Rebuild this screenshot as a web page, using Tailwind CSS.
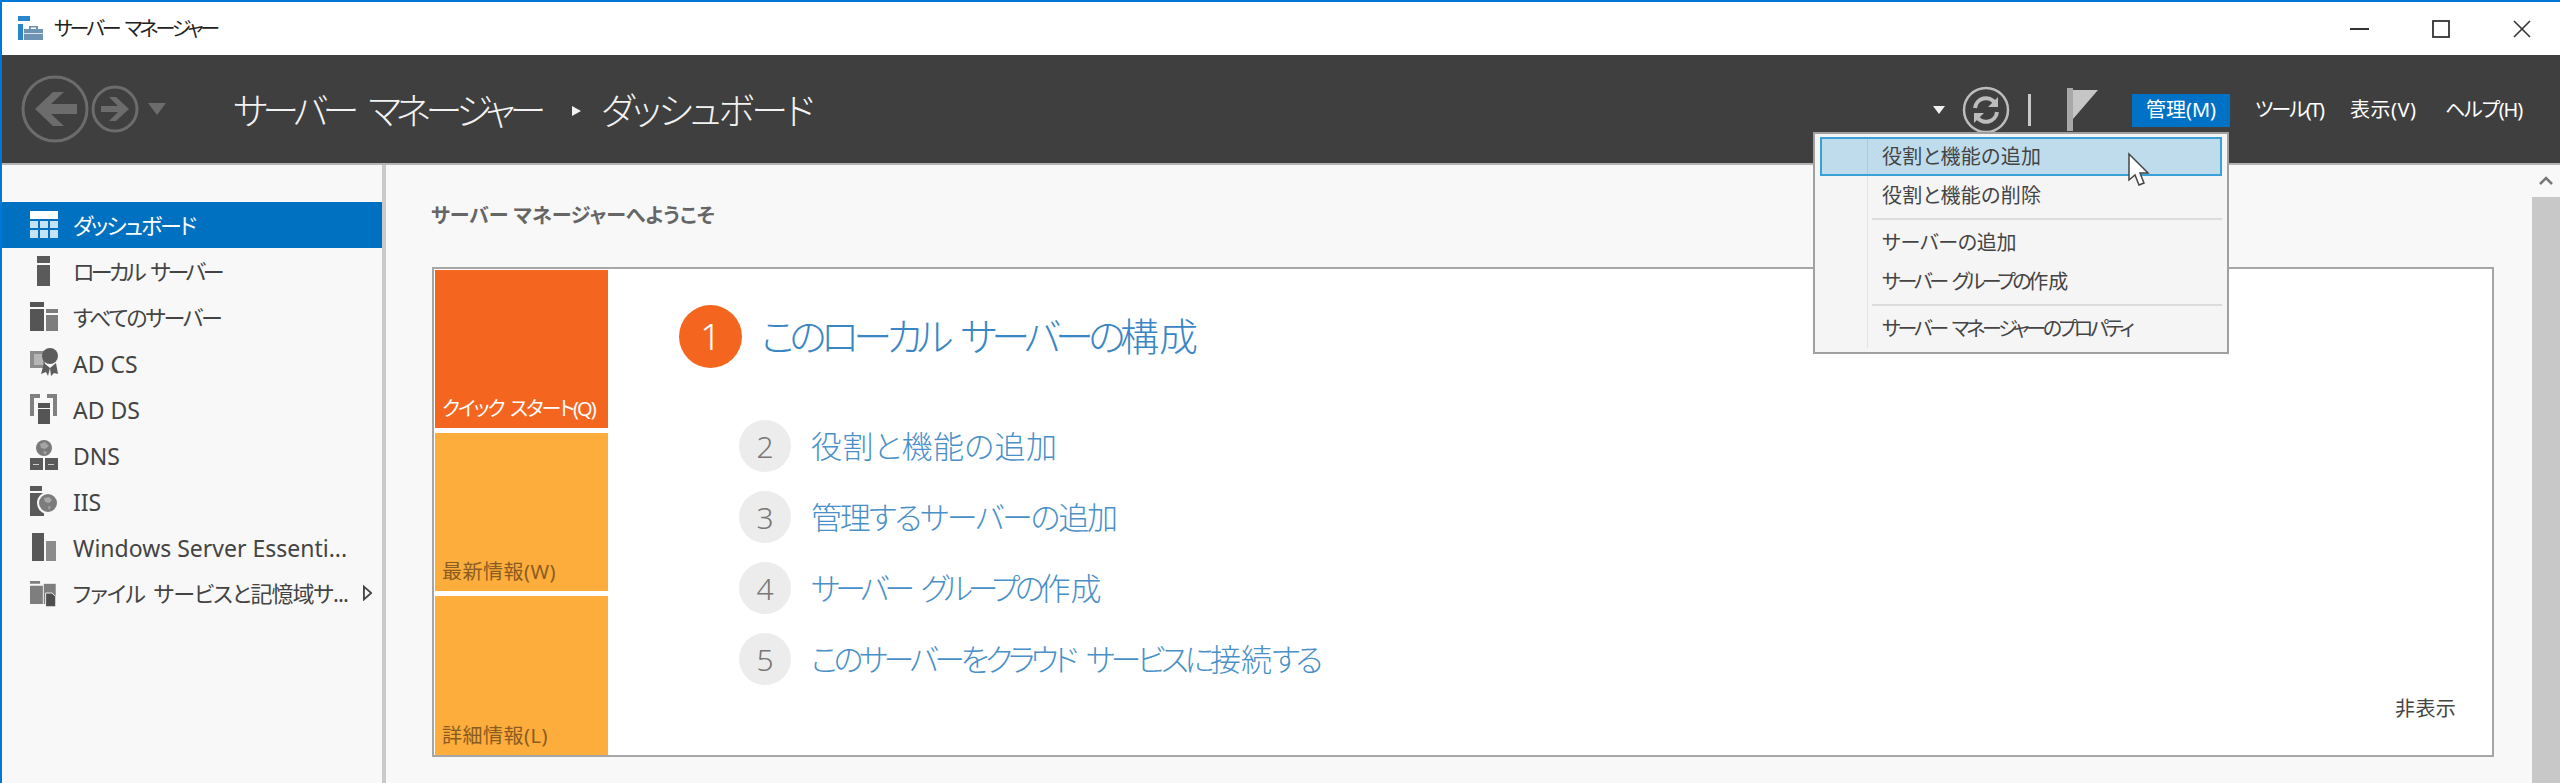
<!DOCTYPE html>
<html lang="ja">
<head>
    <meta charset="UTF-8">
    <title>サーバー マネージャー</title>
    <script src="https://cdn.jsdelivr.net/npm/@tailwindcss/browser@4"></script>
</head>
<body class="bg-[#f8f8f8] overflow-hidden font-['Noto_Sans','Noto_Sans_CJK_JP',sans-serif] [font-feature-settings:'palt']">
<div class="relative w-[2560px] h-[783px] flex flex-col border-l-2 border-t-2 border-[#0078d7]">

    <!-- title bar -->
    <div class="h-[53px] shrink-0 bg-white flex items-center pl-[16px]">
        <svg class="w-[26px] h-[26px]" viewBox="0 0 26 26">
            <rect x="0" y="0" width="12" height="5" fill="#2a86cc"/>
            <rect x="0" y="8" width="5" height="16" fill="#2a86cc"/>
            <path d="M6 13h19v11H6z" fill="#6f93b3"/>
            <path d="M11 13v-3h9v3h-2v-1.500h-5V13z" fill="#6f93b3"/>
            <rect x="6" y="17" width="19" height="1" fill="#dce6ef"/>
        </svg>
        <span class="ml-[10px] text-[20px] text-[#222] tracking-[-3.100px] [word-spacing:4px]">サーバー マネージャー</span>
        <div class="ml-auto flex items-center">
            <svg class="w-[20px] h-[20px] mr-[62px]" viewBox="0 0 20 20"><path d="M0 10h19" stroke="#333" stroke-width="2"/></svg>
            <svg class="w-[18px] h-[18px] mr-[63px]" viewBox="0 0 18 18"><rect x="1" y="1" width="16" height="16" fill="none" stroke="#333" stroke-width="1.800"/></svg>
            <svg class="w-[18px] h-[18px] mr-[29px]" viewBox="0 0 18 18"><path d="M1 1l16 16M17 1L1 17" stroke="#333" stroke-width="1.600"/></svg>
        </div>
    </div>

    <!-- dark header -->
    <div class="h-[110px] shrink-0 bg-[#3f3f3f] border-b-2 border-[#b4b4b4] flex items-center">
        <svg class="ml-[18px] w-[150px] h-[70px]" viewBox="0 0 150 70">
            <circle cx="35" cy="35" r="32" fill="none" stroke="#6c6c6c" stroke-width="3"/>
            <path d="M15 35L33 18h11L31 30h26v10H31l13 12H33z" fill="#6c6c6c"/>
            <circle cx="95" cy="35" r="22" fill="none" stroke="#6c6c6c" stroke-width="3"/>
            <path d="M109 35L96 23h-7l9 9H81v6h17l-9 9h7z" fill="#6c6c6c"/>
            <path d="M128 29h18l-9 12z" fill="#6c6c6c"/>
        </svg>
        <span class="ml-[63px] pt-[3px] text-[37px] text-[#f2f2f2] font-light tracking-[-5.400px] [word-spacing:10px] leading-none whitespace-nowrap">サーバー マネージャー</span>
        <svg class="ml-[28px] mr-[18px] mt-[3px] w-[14px] h-[14px]" viewBox="0 0 14 14"><path d="M3 2l9 5-9 5z" fill="#f2f2f2"/></svg>
        <span class="pt-[3px] text-[37px] text-[#f2f2f2] font-light tracking-[-2.700px] leading-none whitespace-nowrap">ダッシュボード</span>

        <div class="ml-auto flex items-center pr-[37px] pt-[2px]">
            <svg class="w-[12px] h-[8px]" viewBox="0 0 12 8"><path d="M0 0h12L6 8z" fill="#f0f0f0"/></svg>
            <svg class="ml-[17px] w-[48px] h-[48px]" viewBox="0 0 48 48">
                <circle cx="24" cy="24" r="22" fill="none" stroke="#bcbcbc" stroke-width="2.500"/>
                <path d="M13 22a11 11 0 0 1 20-5" fill="none" stroke="#bcbcbc" stroke-width="4"/>
                <path d="M36 11v10h-10z" fill="#bcbcbc"/>
                <path d="M35 26a11 11 0 0 1-20 5" fill="none" stroke="#bcbcbc" stroke-width="4"/>
                <path d="M12 37V27h10z" fill="#bcbcbc"/>
            </svg>
            <span class="ml-[18px] w-[3px] h-[32px] bg-[#c8c8c8]"></span>
            <svg class="ml-[36px] w-[32px] h-[44px]" viewBox="0 0 32 44">
                <rect x="0" y="0" width="6" height="43" fill="#a8a8a8"/>
                <path d="M6 2h25L6 31z" fill="#c6c6c6"/>
            </svg>
            <span class="ml-[33px] h-[33px] w-[98px] bg-[#0072c6] text-white text-[20px] flex items-center justify-center">管理(M)</span>
            <span class="ml-[25px] w-[70px] text-white text-[20px] tracking-[-2px] whitespace-nowrap">ツール(T)</span>
            <span class="ml-[25px] w-[67px] text-white text-[20px] tracking-[0.5px] whitespace-nowrap">表示(V)</span>
            <span class="ml-[28px] w-[78px] text-white text-[20px] tracking-[-1.200px] whitespace-nowrap">ヘルプ(H)</span>
        </div>
    </div>

    <!-- main area -->
    <div class="flex-1 flex min-h-0">
        <!-- sidebar -->
        <nav class="w-[384px] shrink-0 border-r-4 border-[#cacaca] pt-[37px] text-[23px] text-[#444]">
            <div class="h-[46px] flex items-center pl-[28px] gap-[15px] bg-[#0070c0] text-white">
                <svg class="w-[28px] h-[28px]" viewBox="0 0 28 28">
                    <rect x="0" y="0" width="28" height="8" fill="#fff"/>
                    <path d="M0 10h8v7H0zM10 10h8v7h-8zM20 10h8v7h-8zM0 19h8v8H0zM10 19h8v8h-8zM20 19h8v8h-8z" fill="#c5e2f6"/>
                </svg>
                <span class="text-[22px] tracking-[-2.100px]">ダッシュボード</span>
            </div>
            <div class="h-[46px] flex items-center pl-[28px] gap-[15px]">
                <svg class="w-[28px] h-[30px]" viewBox="0 0 28 30">
                    <path d="M7 0h13v7H7zM7 9h13v21H7z" fill="#5a5a5a"/>
                </svg>
                <span class="text-[22px] tracking-[-3.500px] [word-spacing:5px]">ローカル サーバー</span>
            </div>
            <div class="h-[46px] flex items-center pl-[28px] gap-[15px]">
                <svg class="w-[28px] h-[30px]" viewBox="0 0 28 30">
                    <path d="M0 0h14v5H0zM0 7h14v22H0z" fill="#555"/>
                    <path d="M16 7h12v4H16zM16 13h12v16H16z" fill="#7d7d7d"/>
                </svg>
                <span class="text-[22px] tracking-[-2.300px]">すべてのサーバー</span>
            </div>
            <div class="h-[46px] flex items-center pl-[28px] gap-[15px]">
                <svg class="w-[28px] h-[30px]" viewBox="0 0 28 30">
                    <path d="M0 3h15v17H0z" fill="#8c8c8c"/>
                    <path d="M4 6h9v11H4z" fill="#b5b5b5"/>
                    <circle cx="20" cy="8" r="8" fill="#5c5c5c"/>
                    <path d="M14 15l-3 11 5-2 2 4 2-8zM26 15l2 11-4-1-3 3-1-8z" fill="#5c5c5c"/>
                </svg>
                <span class="pt-[2px]">AD CS</span>
            </div>
            <div class="h-[46px] flex items-center pl-[28px] gap-[15px]">
                <svg class="w-[28px] h-[30px]" viewBox="0 0 28 30">
                    <path d="M0 0h10v4H4v18H0zM17 0h10v22h-4V4h-6z" fill="#808080"/>
                    <path d="M8 9h12v5H8zM8 15h12v15H8z" fill="#555"/>
                </svg>
                <span class="pt-[2px]">AD DS</span>
            </div>
            <div class="h-[46px] flex items-center pl-[28px] gap-[15px]">
                <svg class="w-[28px] h-[30px]" viewBox="0 0 28 30">
                    <circle cx="14" cy="8" r="8" fill="#7a7a7a"/>
                    <path d="M10 4l5-2 4 4-4 3-4-1zM13 11l4 1-2 3z" fill="#a5a5a5"/>
                    <rect x="0" y="18" width="13" height="12" fill="#5a5a5a"/>
                    <rect x="15" y="18" width="13" height="12" fill="#5a5a5a"/>
                    <path d="M3 24h6v1H3zM18 24h6v1h-6z" fill="#ccc"/>
                </svg>
                <span class="pt-[2px]">DNS</span>
            </div>
            <div class="h-[46px] flex items-center pl-[28px] gap-[15px]">
                <svg class="w-[28px] h-[30px]" viewBox="0 0 28 30">
                    <path d="M0 0h12v5H0zM0 7h14v23H0z" fill="#5a5a5a"/>
                    <circle cx="18" cy="17" r="11" fill="#f8f8f8"/>
                    <circle cx="18" cy="17" r="9" fill="#7c7c7c"/>
                    <path d="M14 12l5-1 3 3-3 3-4-1zM18 20l3 1-2 3z" fill="#a8a8a8"/>
                </svg>
                <span class="pt-[2px]">IIS</span>
            </div>
            <div class="h-[46px] flex items-center pl-[28px] gap-[15px]">
                <svg class="w-[28px] h-[30px]" viewBox="0 0 28 30">
                    <path d="M2 1h12v28H2z" fill="#585858"/>
                    <path d="M16 9h10v20H16z" fill="#8c8c8c"/>
                </svg>
                <span class="pt-[2px] whitespace-nowrap">Windows Server Essenti...</span>
            </div>
            <div class="h-[46px] flex items-center pl-[28px] gap-[15px]">
                <svg class="w-[28px] h-[30px]" viewBox="0 0 28 30">
                    <path d="M0 2h11v3H0zM0 7h14l0 20H0z" fill="#7e7e7e"/>
                    <path d="M15 5h13v22H15z" fill="#7e7e7e"/>
                    <path d="M17 15h7l4 4v11H17z" fill="#4e4e4e" stroke="#f8f8f8" stroke-width="1"/>
                </svg>
                <span class="ml-[2px] text-[22px] whitespace-nowrap tracking-[-1px] [word-spacing:4px]">ファイル サービスと記憶域サ...</span>
                <svg class="ml-auto mr-[10px] w-[10px] h-[16px]" viewBox="0 0 10 16"><path d="M1 1l8 7-8 7z" fill="none" stroke="#444" stroke-width="2"/></svg>
            </div>
        </nav>

        <!-- content -->
        <main class="flex-1 pl-[45px] pt-[35px] pr-[38px]">
            <h2 class="h-[32px] flex items-center text-[20px] font-bold text-[#666]">サーバー マネージャーへようこそ</h2>
            <div class="ml-[1px] mt-[35px] h-[490px] border-2 border-[#a6a6a6] bg-white flex">
                <div class="w-[173px] shrink-0 ml-[1px] mt-[1px] flex flex-col gap-[5px] text-[20px]">
                    <a class="h-[158px] bg-[#f4661f] text-white flex items-end pl-[7px] pb-[4px] whitespace-nowrap tracking-[-1.900px] [word-spacing:3px]">クイック スタート(Q)</a>
                    <a class="h-[158px] bg-[#fdad3c] text-[#8a5c22] flex items-end pl-[7px] pb-[4px] tracking-[0.5px]">最新情報(W)</a>
                    <a class="h-[159px] bg-[#fdad3c] text-[#8a5c22] flex items-end pl-[7px] pb-[4px] tracking-[0.5px]">詳細情報(L)</a>
                </div>
                <div class="flex-1 flex flex-col pl-[71px] pt-[36px]">
                    <div class="flex items-center gap-[19px]">
                        <span class="w-[63px] h-[63px] rounded-full bg-[#f4661f] text-white text-[36px] font-light flex items-center justify-center">1</span>
                        <span class="text-[39px] font-light text-[#3a86c4] tracking-[-5.600px] [word-spacing:8px] whitespace-nowrap">このローカル サーバーの<span class="tracking-normal">構成</span></span>
                    </div>
                    <div class="mt-[52px] pl-[60px] flex flex-col gap-[19px] text-[31px] font-light text-[#4a90c8]">
                        <div class="flex items-center gap-[20px]">
                            <span class="w-[52px] h-[52px] rounded-full bg-[#ececec] text-[#777] text-[30px] flex items-center justify-center">2</span>
                            <span class="tracking-[0.4px]">役割と機能の追加</span>
                        </div>
                        <div class="flex items-center gap-[20px]">
                            <span class="w-[52px] h-[52px] rounded-full bg-[#ececec] text-[#777] text-[30px] flex items-center justify-center">3</span>
                            <span class="tracking-[-2.200px]">管理するサーバーの追加</span>
                        </div>
                        <div class="flex items-center gap-[20px]">
                            <span class="w-[52px] h-[52px] rounded-full bg-[#ececec] text-[#777] text-[30px] flex items-center justify-center">4</span>
                            <span class="tracking-[-5.100px] [word-spacing:8px]">サーバー グループの<span class="tracking-normal">作成</span></span>
                        </div>
                        <div class="flex items-center gap-[20px]">
                            <span class="w-[52px] h-[52px] rounded-full bg-[#ececec] text-[#777] text-[30px] flex items-center justify-center">5</span>
                            <span class="tracking-[-4.400px] [word-spacing:8px]">このサーバーをクラウド サービスに<span class="tracking-normal">接続</span>する</span>
                        </div>
                    </div>
                    <div class="mt-auto self-end pr-[36px] pb-[31px] text-[20px] text-[#444] tracking-[0.3px]">非表示</div>
                </div>
            </div>
        </main>

        <!-- scrollbar -->
        <div class="w-[28px] shrink-0 flex flex-col">
            <div class="h-[32px] bg-[#f8f8f8] flex items-center justify-center">
                <svg class="w-[14px] h-[10px]" viewBox="0 0 14 10"><path d="M1 8l6-6 6 6" fill="none" stroke="#777" stroke-width="2.500"/></svg>
            </div>
            <div class="flex-1 bg-[#c8c8c8]"></div>
        </div>
    </div>

    <!-- open menu -->
    <div class="absolute left-[1811px] top-[130px] w-[416px] h-[222px] border-2 border-[#a0a0a0] bg-[#f5f5f5] text-[20px] text-[#444] px-[5px] pt-[3px]">
        <div class="h-[39px] flex border-2 border-[#3ba0d8] bg-[#bfdcec]">
            <span class="w-[46px] shrink-0 border-r border-[#aecbdc]"></span>
            <span class="pl-[14px] flex items-center tracking-[0.3px]">役割と機能の追加</span>
        </div>
        <div class="h-[39px] flex">
            <span class="w-[48px] shrink-0 border-r border-[#e2e2e2]"></span>
            <span class="pl-[14px] flex items-center tracking-[0.3px]">役割と機能の削除</span>
        </div>
        <div class="h-[8px] flex items-center"><span class="w-[48px] h-full shrink-0 border-r border-[#e2e2e2]"></span><span class="ml-[4px] flex-1 h-[2px] bg-[#dcdcdc]"></span></div>
        <div class="h-[39px] flex">
            <span class="w-[48px] shrink-0 border-r border-[#e2e2e2]"></span>
            <span class="pl-[14px] flex items-center tracking-[-0.3px]">サーバーの追加</span>
        </div>
        <div class="h-[39px] flex">
            <span class="w-[48px] shrink-0 border-r border-[#e2e2e2]"></span>
            <span class="pl-[14px] block leading-[39px] tracking-[-3.300px] [word-spacing:4px] whitespace-nowrap">サーバー グループの<span class="tracking-normal">作成</span></span>
        </div>
        <div class="h-[8px] flex items-center"><span class="w-[48px] h-full shrink-0 border-r border-[#e2e2e2]"></span><span class="ml-[4px] flex-1 h-[2px] bg-[#dcdcdc]"></span></div>
        <div class="h-[39px] flex">
            <span class="w-[48px] shrink-0 border-r border-[#e2e2e2]"></span>
            <span class="pl-[14px] flex items-center tracking-[-3.300px] [word-spacing:4px] whitespace-nowrap">サーバー マネージャーのプロパティ</span>
        </div>
    </div>

    <!-- mouse pointer -->
    <svg class="absolute left-[2125px] top-[150px] w-[24px] h-[36px]" viewBox="0 0 24 36">
        <path d="M2 2v26l6-5 4 10 5-2-4-10h8z" fill="#fff" stroke="#444" stroke-width="1.500"/>
    </svg>
</div>
</body>
</html>
